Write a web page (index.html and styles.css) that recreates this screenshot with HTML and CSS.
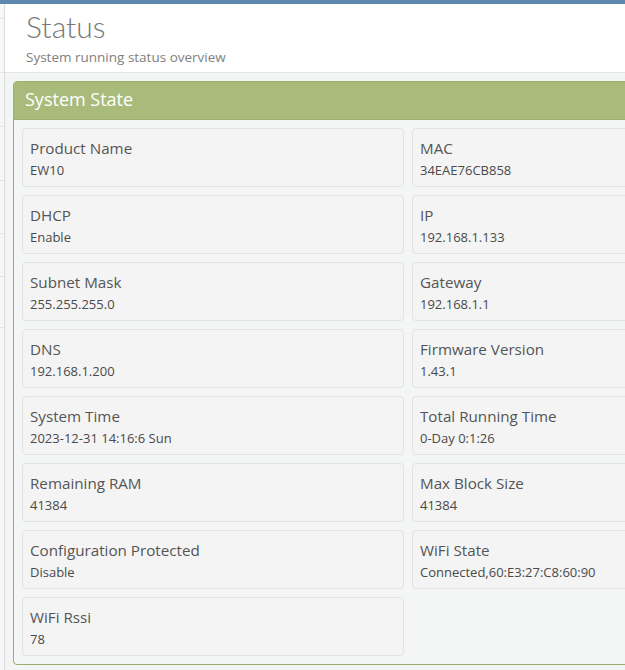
FILE: index.html
```html
<!DOCTYPE html>
<html lang="en">
<head>
<meta charset="utf-8">
<title>Status</title>
<link rel="stylesheet" href="styles.css">
</head>
<body>
<div class="topbar"></div>
<div class="layout">
  <aside class="sidebar">
    <div class="side-item s1"></div>
    <div class="side-item s2"></div>
    <div class="side-item s2"></div>
    <div class="side-item s2"></div>
    <div class="side-item s3"></div>
    <div class="side-item s4"></div>
    <div class="side-item s5"></div>
  </aside>
  <main class="main">
    <header class="content-header">
      <h1 class="title">Status</h1>
      <p class="subtitle">System running status overview</p>
    </header>
    <section class="panel">
      <div class="panel-heading">System State</div>
      <div class="panel-body">
        <div class="card"><div class="label">Product Name</div><div class="value">EW10</div></div>
        <div class="card"><div class="label">MAC</div><div class="value">34EAE76CB858</div></div>
        <div class="card"><div class="label">DHCP</div><div class="value">Enable</div></div>
        <div class="card"><div class="label">IP</div><div class="value">192.168.1.133</div></div>
        <div class="card"><div class="label">Subnet Mask</div><div class="value">255.255.255.0</div></div>
        <div class="card"><div class="label">Gateway</div><div class="value">192.168.1.1</div></div>
        <div class="card"><div class="label">DNS</div><div class="value">192.168.1.200</div></div>
        <div class="card"><div class="label">Firmware Version</div><div class="value">1.43.1</div></div>
        <div class="card"><div class="label">System Time</div><div class="value">2023-12-31 14:16:6 Sun</div></div>
        <div class="card"><div class="label">Total Running Time</div><div class="value">0-Day 0:1:26</div></div>
        <div class="card"><div class="label">Remaining RAM</div><div class="value">41384</div></div>
        <div class="card"><div class="label">Max Block Size</div><div class="value">41384</div></div>
        <div class="card"><div class="label">Configuration Protected</div><div class="value">Disable</div></div>
        <div class="card"><div class="label">WiFi State</div><div class="value">Connected,60:E3:27:C8:60:90</div></div>
        <div class="card"><div class="label">WiFi Rssi</div><div class="value">78</div></div>
      </div>
    </section>
  </main>
</div>
</body>
</html>
```

FILE: styles.css
```css
html, body {
  margin: 0;
  padding: 0;
}
body {
  width: 625px;
  height: 670px;
  overflow: hidden;
  background: #f3f4f4;
  font-family: "Open Sans", "Noto Sans", sans-serif;
  color: #555;
}
.topbar {
  height: 4px;
  background: #5d88b0;
}
.layout {
  display: flex;
  align-items: flex-start;
}
.sidebar {
  flex: none;
  width: 4px;
  height: 666px;
  background: #f7f7f7;
  border-right: 1px solid #dcdcdc;
  display: flex;
  flex-direction: column;
}
.side-item {
  border-bottom: 1px solid #e4e4e4;
}
.s1 { height: 14px; }
.s2 { height: 53px; }
.s3 { height: 52px; }
.s4 { height: 42px; }
.s5 { height: 50px; }
.main {
  flex: none;
  width: 620px;
}
.content-header {
  background: #fff;
  border-bottom: 1px solid #e4e5e5;
  padding: 4px 21px 5px;
}
.title {
  margin: 0;
  font-family: Lato, "Open Sans", sans-serif;
  font-weight: 300;
  font-size: 30px;
  line-height: 36px;
  color: #777;
}
.subtitle {
  margin: 3px 0 0;
  font-size: 13.5px;
  line-height: 20px;
  color: #808080;
}
.panel {
  margin: 8px 0 0 8px;
  width: 1000px;
  border: 1px solid #9db06b;
  border-radius: 4px;
  background: #f4f5f5;
}
.panel-heading {
  background: #a9bb7b;
  border-bottom: 1px solid #9db06b;
  border-radius: 3px 3px 0 0;
  color: #fff;
  font-size: 18px;
  line-height: 24px;
  padding: 5px 11px 8px;
}
.panel-body {
  display: grid;
  grid-template-columns: 382px 382px;
  grid-auto-rows: 59px;
  gap: 8px;
  padding: 8px;
}
.card {
  box-sizing: border-box;
  background: #f4f4f4;
  border: 1px solid #e2e2e2;
  border-radius: 4px;
  padding: 9px 7px 0;
}
.label {
  font-size: 15.2px;
  line-height: 20px;
  color: #555;
}
.value {
  margin-top: 3px;
  font-size: 13px;
  line-height: 18px;
  color: #4a4a4a;
}
```
